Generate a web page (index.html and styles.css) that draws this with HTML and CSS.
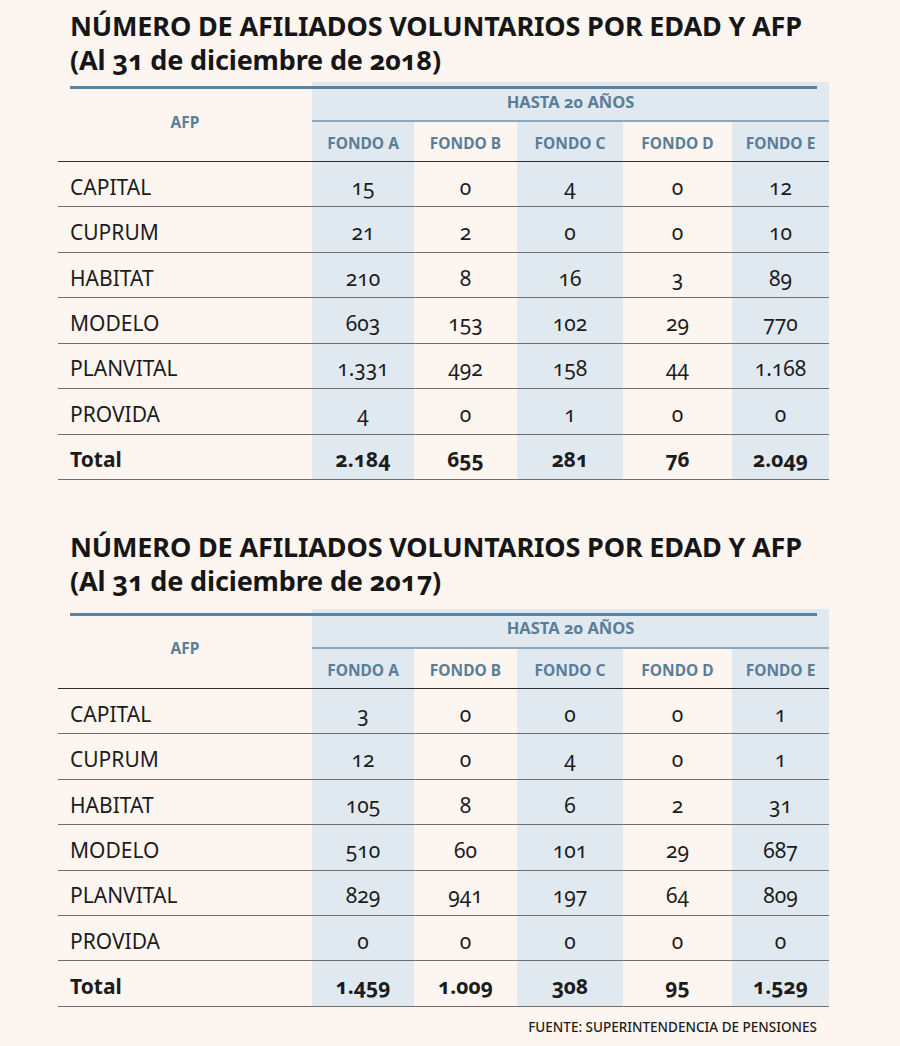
FILE: index.html
```html
<!DOCTYPE html>
<html lang="es">
<head>
<meta charset="utf-8">
<title>Afiliados voluntarios</title>
<link rel="stylesheet" href="styles.css">
</head>
<body>
<div class="page">
  <section class="block">
    <h2 class="title">NÚMERO DE AFILIADOS VOLUNTARIOS POR EDAD Y AFP<br>(Al 31 de diciembre de 2018)</h2>
    <div class="tbl-wrap">
      <table class="tbl">
        <colgroup><col class="c-afp"><col class="c-a"><col class="c-b"><col class="c-c"><col class="c-d"><col class="c-e"></colgroup>
        <thead>
          <tr class="r-group"><th class="h-afp" rowspan="2">AFP</th><th class="h-group" colspan="5">HASTA 20 AÑOS</th></tr>
          <tr class="r-fondo"><th class="alt">FONDO A</th><th>FONDO B</th><th class="alt">FONDO C</th><th>FONDO D</th><th class="alt">FONDO E</th></tr>
        </thead>
        <tbody>
          <tr><td class="name">CAPITAL</td><td class="alt">15</td><td>0</td><td class="alt">4</td><td>0</td><td class="alt">12</td></tr>
          <tr><td class="name">CUPRUM</td><td class="alt">21</td><td>2</td><td class="alt">0</td><td>0</td><td class="alt">10</td></tr>
          <tr><td class="name">HABITAT</td><td class="alt">210</td><td>8</td><td class="alt">16</td><td>3</td><td class="alt">89</td></tr>
          <tr><td class="name">MODELO</td><td class="alt">603</td><td>153</td><td class="alt">102</td><td>29</td><td class="alt">770</td></tr>
          <tr><td class="name">PLANVITAL</td><td class="alt">1.331</td><td>492</td><td class="alt">158</td><td>44</td><td class="alt">1.168</td></tr>
          <tr><td class="name">PROVIDA</td><td class="alt">4</td><td>0</td><td class="alt">1</td><td>0</td><td class="alt">0</td></tr>
          <tr class="total"><td class="name">Total</td><td class="alt">2.184</td><td>655</td><td class="alt">281</td><td>76</td><td class="alt">2.049</td></tr>
        </tbody>
      </table>
    </div>
  </section>

  <section class="block block-second">
    <h2 class="title">NÚMERO DE AFILIADOS VOLUNTARIOS POR EDAD Y AFP<br>(Al 31 de diciembre de 2017)</h2>
    <div class="tbl-wrap">
      <table class="tbl">
        <colgroup><col class="c-afp"><col class="c-a"><col class="c-b"><col class="c-c"><col class="c-d"><col class="c-e"></colgroup>
        <thead>
          <tr class="r-group"><th class="h-afp" rowspan="2">AFP</th><th class="h-group" colspan="5">HASTA 20 AÑOS</th></tr>
          <tr class="r-fondo"><th class="alt">FONDO A</th><th>FONDO B</th><th class="alt">FONDO C</th><th>FONDO D</th><th class="alt">FONDO E</th></tr>
        </thead>
        <tbody>
          <tr><td class="name">CAPITAL</td><td class="alt">3</td><td>0</td><td class="alt">0</td><td>0</td><td class="alt">1</td></tr>
          <tr><td class="name">CUPRUM</td><td class="alt">12</td><td>0</td><td class="alt">4</td><td>0</td><td class="alt">1</td></tr>
          <tr><td class="name">HABITAT</td><td class="alt">105</td><td>8</td><td class="alt">6</td><td>2</td><td class="alt">31</td></tr>
          <tr><td class="name">MODELO</td><td class="alt">510</td><td>60</td><td class="alt">101</td><td>29</td><td class="alt">687</td></tr>
          <tr><td class="name">PLANVITAL</td><td class="alt">829</td><td>941</td><td class="alt">197</td><td>64</td><td class="alt">809</td></tr>
          <tr><td class="name">PROVIDA</td><td class="alt">0</td><td>0</td><td class="alt">0</td><td>0</td><td class="alt">0</td></tr>
          <tr class="total"><td class="name">Total</td><td class="alt">1.459</td><td>1.009</td><td class="alt">308</td><td>95</td><td class="alt">1.529</td></tr>
        </tbody>
      </table>
    </div>
    <p class="source">FUENTE: SUPERINTENDENCIA DE PENSIONES</p>
  </section>
</div>
</body>
</html>
```

FILE: styles.css
```css
html, body {
  margin: 0;
  padding: 0;
  background: #fdf5f0;
}

body {
  font-family: "Noto Sans", "Open Sans", sans-serif;
  font-stretch: semi-condensed;
  color: #1c1c1c;
  font-variant-numeric: oldstyle-nums;
}

.page {
  width: 771px;
  padding: 9px 0 0 58px;
}

.block-second {
  margin-top: 50px;
}

.title {
  margin: 0 0 0 12px;
  font-size: 27px;
  line-height: 34px;
  font-weight: 700;
  letter-spacing: -0.15px;
  color: #161616;
}

.tbl-wrap {
  position: relative;
  margin-top: 5px;
}

.block-second .tbl-wrap {
  margin-top: 11px;
}

.tbl-wrap::before {
  content: "";
  position: absolute;
  left: 12px;
  top: 4px;
  width: 747px;
  height: 3px;
  background: #5b82a0;
  z-index: 1;
}

.tbl {
  width: 771px;
  table-layout: fixed;
  border-collapse: separate;
  border-spacing: 0;
}

.c-afp { width: 254px; }
.c-a { width: 102px; }
.c-b { width: 103px; }
.c-c { width: 106px; }
.c-d { width: 109px; }
.c-e { width: 97px; }

.tbl th, .tbl td {
  box-sizing: border-box;
  padding: 0;
  text-align: center;
  vertical-align: middle;
}

.tbl th {
  font-size: 15.5px;
  font-weight: 700;
  color: #5a7e98;
}

.h-afp {
  border-bottom: 1px solid #2e2e2e;
  padding-top: 12px;
}

.h-group {
  height: 40px;
  background: #e0e9f0;
  border-bottom: 2px solid #8ea7ba;
  padding-top: 6px;
}

.tbl th.h-group {
  font-size: 16.5px;
}

.r-fondo th {
  height: 40px;
  border-bottom: 1px solid #2e2e2e;
  padding-top: 3px;
}

.alt {
  background: #e0e9f0;
}

.tbl td {
  height: 45.43px;
  font-size: 21px;
  border-bottom: 1px solid #726d6a;
  padding-top: 5px;
}

.tbl td.name {
  text-align: left;
  padding-left: 12px;
}

.total td {
  font-weight: 700;
}

.source {
  margin: 10px 12px 0 0;
  text-align: right;
  font-size: 13.5px;
  font-weight: 500;
  line-height: 20px;
  color: #1c1c1c;
}
```
